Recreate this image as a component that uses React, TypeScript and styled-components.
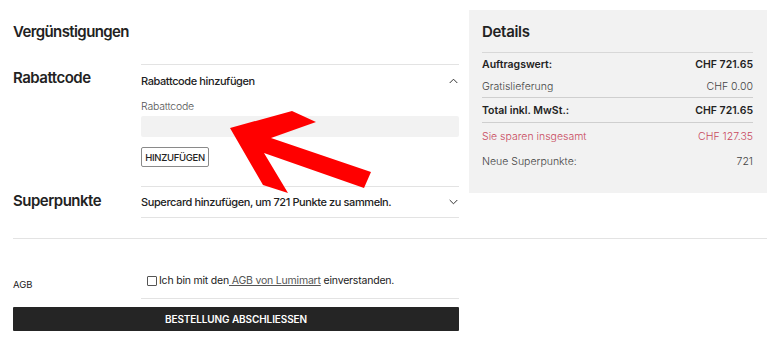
import React from "react";
import styled, { createGlobalStyle } from "styled-components";

const GlobalStyle = createGlobalStyle`
  html, body {
    margin: 0;
    padding: 0;
    background: #fff;
  }
  body {
    font-family: Inter, "Open Sans", "Liberation Sans", sans-serif;
    color: #222;
  }
`;

type SummaryRow = {
  label: string;
  value: string;
  strong?: boolean;
  tone?: "muted" | "red";
  divider?: boolean;
  h: number;
};

const rows: SummaryRow[] = [
  { label: "Auftragswert:", value: "CHF 721.65", strong: true, h: 23 },
  { label: "Gratislieferung", value: "CHF 0.00", tone: "muted", divider: true, h: 21 },
  { label: "Total inkl. MwSt.:", value: "CHF 721.65", strong: true, divider: true, h: 24 },
  { label: "Sie sparen insgesamt", value: "CHF 127.35", tone: "red", h: 26 },
  { label: "Neue Superpunkte:", value: "721", tone: "muted", h: 24 },
];

export default function App() {
  return (
    <Page>
      <GlobalStyle />
      <Top>
        <Main>
          <Title>Vergünstigungen</Title>

          <Section>
            <SideLabel>Rabattcode</SideLabel>
            <Body $top>
              <AccordionHead $h={31}>
                <span>Rabattcode hinzufügen</span>
                <Chevron up />
              </AccordionHead>
              <FieldLabel>Rabattcode</FieldLabel>
              <Input />
              <GhostButton>HINZUFÜGEN</GhostButton>
            </Body>
          </Section>

          <Section>
            <SideLabel $pad={5}>Superpunkte</SideLabel>
            <Body $top $bottom>
              <AccordionHead $h={30}>
                <span>Supercard hinzufügen, um 721 Punkte zu sammeln.</span>
                <Chevron />
              </AccordionHead>
            </Body>
          </Section>
        </Main>

        <Summary>
          <SummaryTitle>Details</SummaryTitle>
          {rows.map((r) => (
            <Row key={r.label} $strong={r.strong} $tone={r.tone} $divider={r.divider} $h={r.h}>
              <span>{r.label}</span>
              <span>{r.value}</span>
            </Row>
          ))}
        </Summary>
      </Top>

      <Rule />

      <Terms>
        <TermsLabel>AGB</TermsLabel>
        <TermsBody>
          <Check />
          <span>
            Ich bin mit den<TermsLink> AGB von Lumimart</TermsLink> einverstanden.
          </span>
        </TermsBody>
      </Terms>

      <Submit>BESTELLUNG ABSCHLIESSEN</Submit>

      <Arrow viewBox="0 0 778 343" width={778} height={343}>
        <polygon
          points="230,128 292,111 316,122 271,138 371,172 364,188 264,153 288,193 263,185"
          fill="#ff0000"
        />
      </Arrow>
    </Page>
  );
}

function Chevron({ up }: { up?: boolean }) {
  return (
    <svg width="9" height="6" viewBox="0 0 9 6" fill="none">
      <polyline
        points={up ? "0.7,5 4.5,1.2 8.3,5" : "0.7,1 4.5,4.8 8.3,1"}
        stroke="#333"
        strokeWidth="1"
      />
    </svg>
  );
}

/* ---------------- styled ---------------- */
const Page = styled.div`
  position: relative;
  width: 778px;
  height: 343px;
  padding: 10px 11px 0 13px;
  box-sizing: border-box;
  overflow: hidden;
`;

const Top = styled.div`
  display: flex;
  gap: 10px;
  align-items: flex-start;
`;

const Main = styled.div`
  width: 446px;
  flex: none;
`;

const Title = styled.h2`
  margin: 12px 0 22px;
  font-size: 15px;
  line-height: 20px;
  font-weight: 600;
  letter-spacing: -0.6px;
`;

const Section = styled.div`
  display: grid;
  grid-template-columns: 128px 318px;
`;

const SideLabel = styled.div<{ $pad?: number }>`
  padding-top: ${({ $pad }) => $pad ?? 4}px;
  font-size: 15px;
  line-height: 20px;
  font-weight: 600;
  letter-spacing: -0.5px;
`;

const Body = styled.div<{ $top?: boolean; $bottom?: boolean }>`
  border-top: ${({ $top }) => ($top ? "1px solid #e3e3e3" : "none")};
  border-bottom: ${({ $bottom }) => ($bottom ? "1px solid #e3e3e3" : "none")};
  padding-bottom: ${({ $bottom }) => ($bottom ? 0 : 19)}px;
`;

const AccordionHead = styled.div<{ $h: number }>`
  height: ${({ $h }) => $h}px;
  display: flex;
  align-items: center;
  justify-content: space-between;
  padding-right: 1px;
  font-size: 11px;
  font-weight: 500;
  letter-spacing: -0.4px;
  color: #222;
`;

const FieldLabel = styled.div`
  margin-top: 4px;
  font-size: 10.5px;
  line-height: 14px;
  font-weight: 300;
  letter-spacing: -0.2px;
  color: #555;
`;

const Input = styled.div`
  margin-top: 2px;
  height: 21px;
  background: #f2f2f2;
  border-radius: 2px;
`;

const GhostButton = styled.button`
  margin-top: 10px;
  height: 20px;
  width: 68px;
  padding: 0;
  border: 1px solid #8a8a8a;
  border-radius: 2px;
  background: #fff;
  font-family: inherit;
  font-size: 9.5px;
  font-weight: 500;
  letter-spacing: -0.3px;
  color: #222;
`;

const Summary = styled.aside`
  width: 298px;
  height: 183px;
  flex: none;
  box-sizing: border-box;
  padding: 11px 14px 0 13px;
  background: #f2f2f2;
`;

const SummaryTitle = styled.h3`
  margin: 0;
  height: 32px;
  box-sizing: border-box;
  border-bottom: 1px solid #d8d8d8;
  display: flex;
  align-items: center;
  font-size: 15px;
  font-weight: 600;
  letter-spacing: -0.3px;
  padding-bottom: 10px;
`;

const Row = styled.div<{
  $strong?: boolean;
  $tone?: "muted" | "red";
  $divider?: boolean;
  $h: number;
}>`
  height: ${({ $h }) => $h}px;
  display: flex;
  align-items: center;
  justify-content: space-between;
  border-bottom: ${({ $divider }) => ($divider ? "1px solid #cfcfcf" : "none")};
  font-size: 10.5px;
  font-weight: ${({ $strong }) => ($strong ? 600 : 300)};
  color: ${({ $tone }) => ($tone === "red" ? "#c8495d" : $tone === "muted" ? "#444" : "#222")};
`;

const Rule = styled.hr`
  margin: 20px 0 0;
  width: 754px;
  border: none;
  border-top: 1px solid #e3e3e3;
`;

const Terms = styled.div`
  display: grid;
  grid-template-columns: 128px 318px;
  margin-top: 34px;
`;

const TermsLabel = styled.div`
  padding-top: 4px;
  font-size: 9.5px;
  line-height: 16px;
  color: #222;
`;

const TermsBody = styled.div`
  display: flex;
  align-items: center;
  gap: 2px;
  padding: 0 0 9px 6px;
  line-height: 16px;
  border-bottom: 1px solid #e3e3e3;
  font-size: 10.5px;
  letter-spacing: -0.2px;
  color: #222;
`;

const Check = styled.span`
  width: 8px;
  height: 8px;
  border: 1px solid #555;
  border-radius: 1px;
  flex: none;
`;

const TermsLink = styled.span`
  text-decoration: underline;
  color: #555;
`;

const Submit = styled.button`
  display: block;
  margin-top: 8px;
  width: 446px;
  height: 24px;
  border: none;
  border-radius: 1px;
  background: #252525;
  color: #fff;
  font-family: inherit;
  font-size: 10px;
  font-weight: 600;
  letter-spacing: -0.1px;
`;

const Arrow = styled.svg`
  position: absolute;
  left: 0;
  top: 0;
  pointer-events: none;
`;
